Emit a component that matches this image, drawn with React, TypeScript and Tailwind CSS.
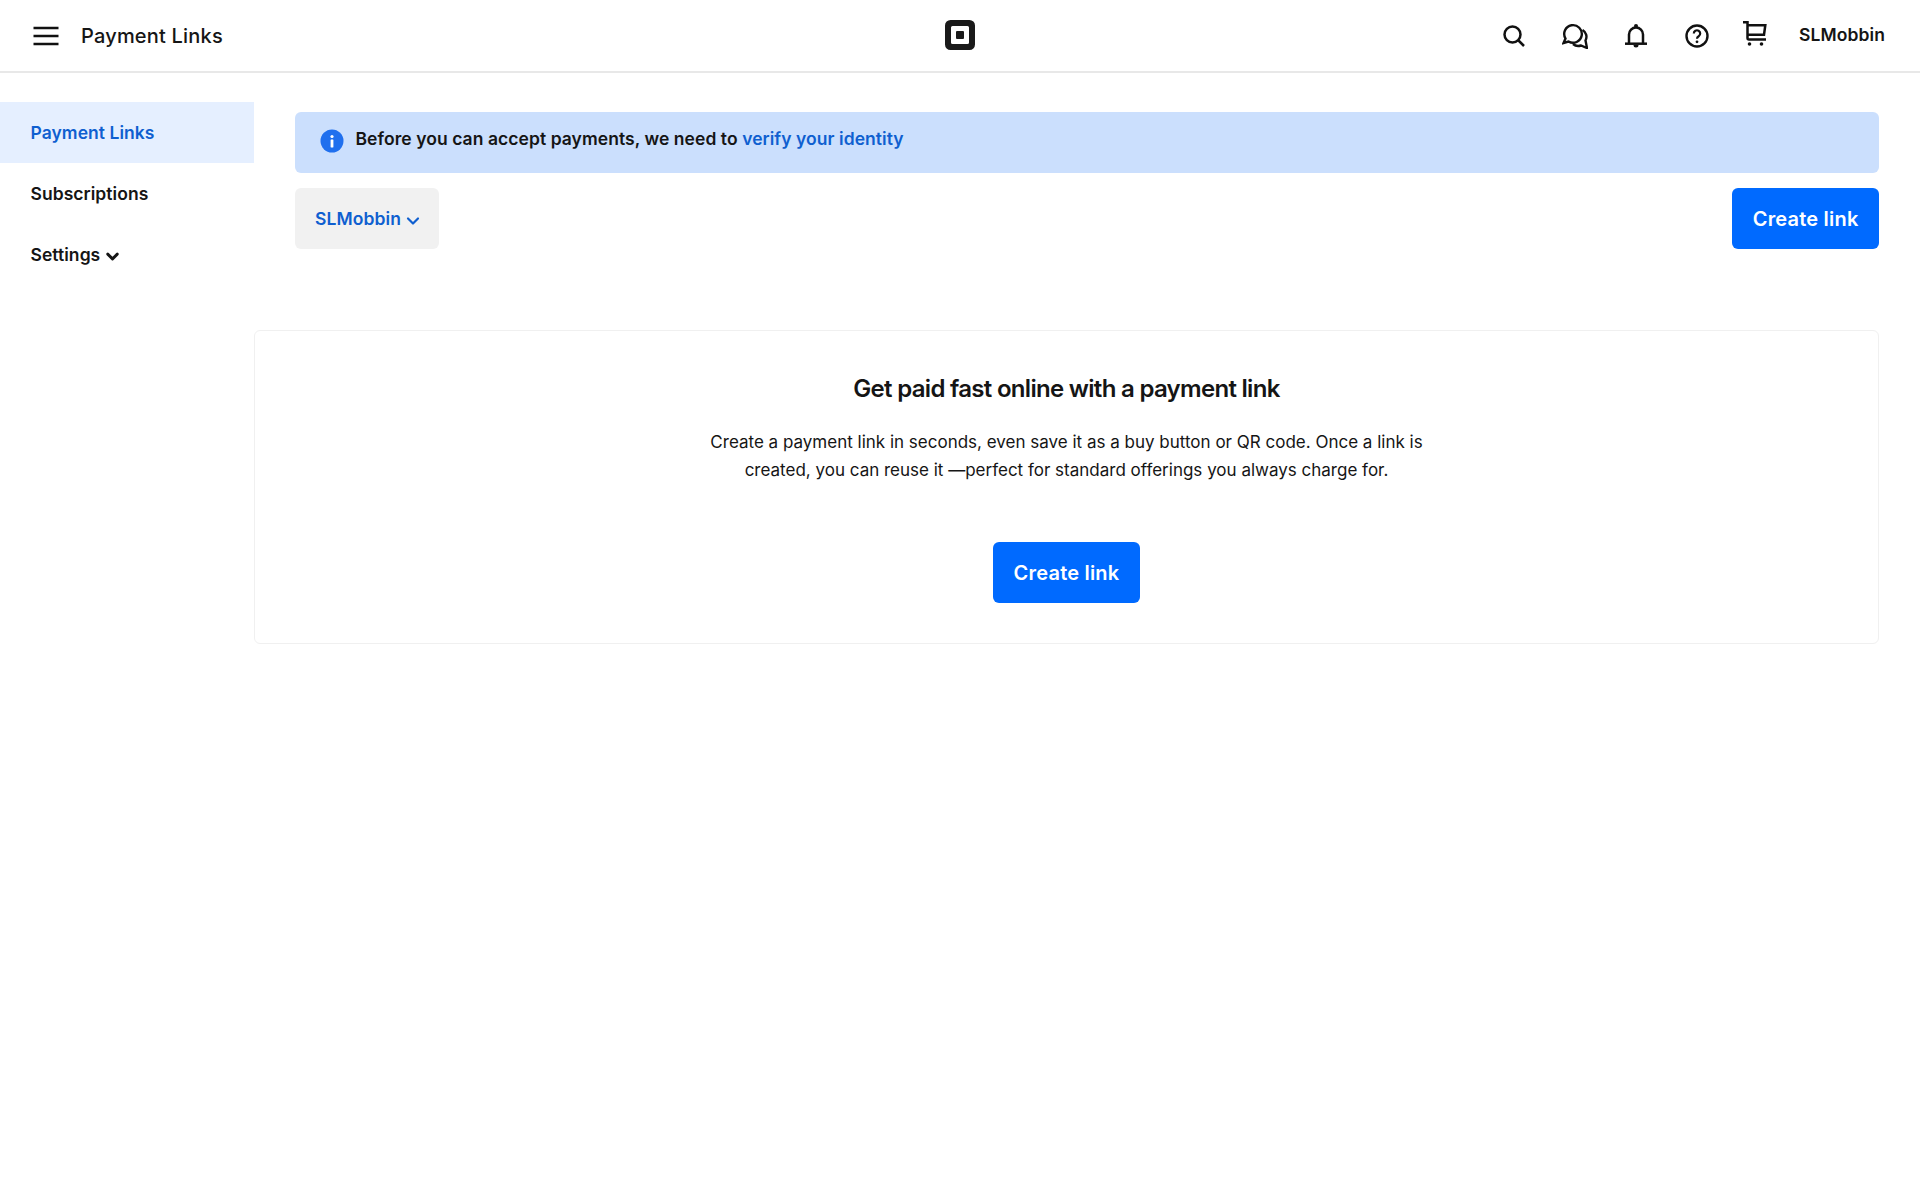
import { ChevronDown } from "lucide-react";

const font = { fontFamily: "Inter, sans-serif" };

function MenuIcon() {
  return (
    <svg width="26" height="20" viewBox="0 0 26 20" fill="none" stroke="#111" strokeWidth="2.4">
      <path d="M0.5 2h25M0.5 10h25M0.5 18h25" />
    </svg>
  );
}

function SquareLogo() {
  return (
    <svg width="30" height="30" viewBox="0 0 30 30" className="mb-[1px]">
      <path
        fillRule="evenodd"
        fill="#1a1a1a"
        d="M5.5 0h19A5.5 5.5 0 0 1 30 5.5v19a5.5 5.5 0 0 1-5.5 5.5h-19A5.5 5.5 0 0 1 0 24.500v-19A5.500 5.500 0 0 1 5.500 0ZM7.500 6A1.500 1.500 0 0 0 6 7.500v15A1.500 1.500 0 0 0 7.500 24h15a1.500 1.500 0 0 0 1.500-1.500v-15A1.500 1.500 0 0 0 22.500 6Z"
      />
      <rect x="11" y="11" width="8" height="8" rx="1" fill="#1a1a1a" />
    </svg>
  );
}

function SearchIcon() {
  return (
    <svg width="24" height="24" viewBox="0 0 24 24" fill="none" stroke="#111" strokeWidth="2.5">
      <circle cx="10.500" cy="10.500" r="8" />
      <path d="M16 16l6 6" />
    </svg>
  );
}

function ChatIcon() {
  return (
    <svg width="26" height="26" viewBox="0 0 26 26" fill="none" stroke="#111" strokeWidth="2.4">
      <path d="M3.500 15.500L1.500 20L6.500 18.500A8.800 8.800 0 1 0 3.500 15.500Z" />
      <path d="M20.500 7A7.800 7.800 0 0 1 23.500 17.500L25 25L19 22.500A8 8 0 0 1 11 21" />
    </svg>
  );
}

function BellIcon() {
  return (
    <svg width="22" height="24" viewBox="0 0 22 24" fill="none" stroke="#111" strokeWidth="2.5">
      <path d="M4 19.500V10.500a7 7 0 0 1 14 0V19.500" />
      <path d="M0 19.700h22" />
      <circle cx="11" cy="2" r="2" fill="#111" stroke="none" />
      <path d="M8.500 21h5a2.500 2.500 0 0 1-5 0Z" fill="#111" stroke="none" />
    </svg>
  );
}

function HelpIcon() {
  return (
    <svg width="24" height="24" viewBox="0 0 24 24" fill="none" stroke="#111" strokeWidth="2.4">
      <circle cx="12" cy="12" r="10.500" />
      <path d="M8.800 9.500a3.200 3.200 0 1 1 4.900 2.700c-1.100.7-1.700 1.300-1.700 2.500" strokeWidth="2.200" />
      <circle cx="12" cy="17.800" r="1.400" fill="#111" stroke="none" />
    </svg>
  );
}

function CartIcon() {
  return (
    <svg width="24" height="25" viewBox="0 0 24 25" fill="none" stroke="#111" strokeWidth="2.500">
      <path d="M0 1.300h4.500V17c0 1 .6 1.500 1.500 1.500h17" />
      <path d="M4.500 4.200h17.800L21 13.800H4.500" />
      <circle cx="6.500" cy="23" r="1.800" fill="#111" stroke="none" />
      <circle cx="18.500" cy="23" r="1.800" fill="#111" stroke="none" />
    </svg>
  );
}

function InfoIcon() {
  return (
    <svg width="24" height="24" viewBox="0 0 24 24">
      <circle cx="12" cy="12" r="11.500" fill="#1f6fee" />
      <circle cx="12" cy="7.500" r="1.600" fill="#fff" />
      <rect x="10.600" y="10.500" width="2.800" height="8" rx="0.400" fill="#fff" />
    </svg>
  );
}

function CreateButton() {
  return (
    <button className="h-[61px] rounded-[6px] bg-[#006aff] px-[20.500px] text-[20px] font-semibold tracking-[0.2px] text-white">
      Create link
    </button>
  );
}

export default function App() {
  return (
    <div style={font} className="min-h-[1200px] bg-white text-[#151515]">
      <header className="flex h-[73px] items-center justify-between border-b-2 border-[#e8e8e8] pl-[33px] pr-[35px]">
        <div className="flex w-[500px] items-center gap-[22px]">
          <MenuIcon />
          <span className="text-[20px] font-medium tracking-[0.2px]">Payment Links</span>
        </div>
        <SquareLogo />
        <div className="flex w-[498px] items-center justify-end">
          <div className="flex w-[61px] justify-center"><SearchIcon /></div>
          <div className="flex w-[61px] justify-center"><ChatIcon /></div>
          <div className="flex w-[61px] justify-center"><BellIcon /></div>
          <div className="flex w-[61px] justify-center"><HelpIcon /></div>
          <div className="mb-1 flex w-[55px] justify-center"><CartIcon /></div>
          <span className="ml-[16px] text-[17.500px] font-semibold tracking-[0.1px]">SLMobbin</span>
        </div>
      </header>

      <div className="flex">
        <nav className="w-[254px] shrink-0 pt-[29px] text-[17.500px] font-semibold tracking-[0.05px]">
          <div className="flex h-[61px] items-center bg-[#e5efff] pl-[30.500px] pt-[1px] text-[#0f5fd0]">Payment Links</div>
          <div className="flex h-[61px] items-center pl-[30.500px] pt-[1px]">Subscriptions</div>
          <div className="flex h-[61px] items-center gap-[3px] pl-[30.500px] pt-[1px]">
            Settings
            <ChevronDown size={19} strokeWidth={3.600} className="mt-[2px]" />
          </div>
        </nav>

        <main className="flex-1 pr-[41px] pt-[39px]">
          <div className="ml-[41px]">
            <div className="flex h-[61px] items-center rounded-[6px] bg-[#cbdffd] pl-[24.500px] text-[17.500px] font-semibold tracking-[0.06px]">
              <span className="mb-[3px]"><InfoIcon /></span>
              <span className="ml-[12px] mb-[6px]">
                Before you can accept payments, we need to{" "}
                <span className="text-[#0f5fd0]">verify your identity</span>
              </span>
            </div>
            <div className="mt-[15px] flex items-center justify-between">
              <div className="flex h-[61px] w-[144px] items-center gap-[2px] rounded-[6px] bg-[#f1f1f1] pl-[20px] pt-[1px] text-[17.500px] font-semibold tracking-[0.1px] text-[#0f5fd0]">
                SLMobbin
                <ChevronDown size={20} strokeWidth={2.600} className="mt-[3px]" />
              </div>
              <CreateButton />
            </div>
          </div>

          <section className="mt-[81px] flex h-[314px] flex-col items-center rounded-[6px] border border-[#f0f0f0] pt-[42px]">
            <h1 className="text-[24px] leading-[32px] font-semibold tracking-[-0.7px]">
              Get paid fast online with a payment link
            </h1>
            <p className="mt-[23px] w-[760px] text-center text-[17px] leading-[28px]">
              Create a payment link in seconds, even save it as a buy button or QR code. Once a link is
              <br />
              created, you can reuse it —perfect for standard offerings you always charge for.
            </p>
            <div className="mt-[58px]">
              <CreateButton />
            </div>
          </section>
        </main>
      </div>
    </div>
  );
}
